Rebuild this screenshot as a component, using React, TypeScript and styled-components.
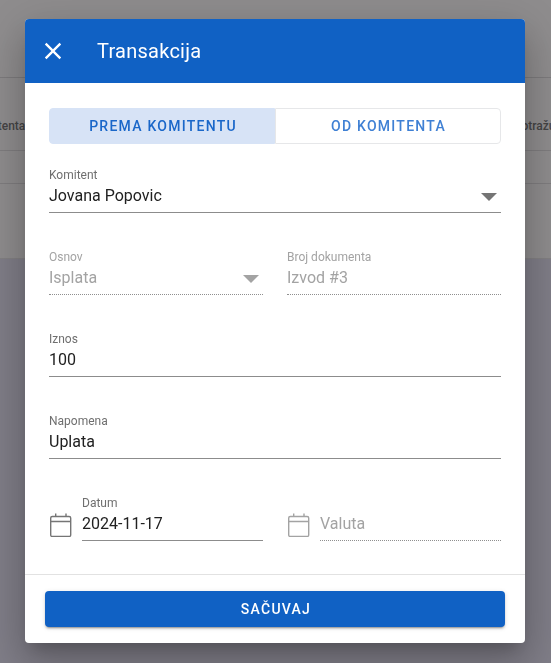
import React from "react";
import styled, { createGlobalStyle } from "styled-components";

const Global = createGlobalStyle`
  html, body { margin: 0; padding: 0; height: 100%; }
  body { font-family: Roboto, "Liberation Sans", sans-serif; background: #7f7d87; overflow: hidden; }
  #root { height: 100%; }
`;

const Page = styled.div`
  height: 663px;
  display: flex;
  flex-direction: column;
  background: #807e88;
`;
const PageTop = styled.div`
  height: 259px;
  box-sizing: border-box;
  background: #8f8d8e;
  border-bottom: 1px solid #838183;
  display: flex;
  flex-direction: column;
`;
const TopBar = styled.div`
  height: 78px;
  flex: none;
  box-sizing: border-box;
  background: #8f8d8e;
  border-bottom: 1px solid #7d7b7d;
`;
const HeaderRow = styled.div`
  height: 73px;
  flex: none;
  box-sizing: border-box;
  padding-top: 24px;
  display: flex;
  justify-content: space-between;
  align-items: center;
  border-bottom: 1px solid #7f7d7f;
  font-size: 12px;
  font-weight: 500;
  color: #454445;
  overflow: hidden;
  white-space: nowrap;
`;
const CellLeft = styled.span`
  margin-left: -30px;
`;
const CellRight = styled.span`
  margin-right: -14px;
`;
const BodyRow = styled.div`
  height: 33px;
  flex: none;
  box-sizing: border-box;
  border-bottom: 1px solid #7f7d7f;
`;

const Scrim = styled.div`
  position: fixed;
  inset: 0;
  display: flex;
  align-items: flex-start;
  padding: 19px 0 0 25px;
`;
const Dialog = styled.div`
  width: 500px;
  height: 624px;
  display: flex;
  flex-direction: column;
  background: #fff;
  border-radius: 4px;
  overflow: hidden;
  box-shadow: 0 11px 15px -7px rgba(0,0,0,.2), 0 24px 38px 3px rgba(0,0,0,.14), 0 9px 46px 8px rgba(0,0,0,.12);
`;
const Header = styled.header`
  height: 64px;
  flex: none;
  display: flex;
  align-items: center;
  padding-left: 14px;
  background: #1061c4;
  color: #fff;
`;
const CloseBtn = styled.span`
  display: flex;
  width: 28px;
  height: 28px;
`;
const Title = styled.h2`
  margin: 0 0 0 30px;
  font-size: 20px;
  font-weight: 400;
  letter-spacing: 0.25px;
`;
const Content = styled.div`
  flex: 1;
  padding: 25px 24px 0;
  display: flex;
  flex-direction: column;
`;
const Toggle = styled.div`
  display: flex;
  height: 36px;
  margin-bottom: 20px;
`;
const ToggleBtn = styled.div<{ $active?: boolean }>`
  flex: 0 0 50%;
  box-sizing: border-box;
  display: flex;
  align-items: center;
  justify-content: center;
  padding-left: ${p => (p.$active ? "2px" : "1px")};
  font-size: 14px;
  font-weight: 500;
  letter-spacing: 1.25px;
  color: ${p => (p.$active ? "#1a67c9" : "#3f80d4")};
  background: ${p => (p.$active ? "#d7e3f6" : "#fff")};
  border: 1px solid ${p => (p.$active ? "#d7e3f6" : "#e6e7e9")};
  border-radius: ${p => (p.$active ? "4px 0 0 4px" : "0 4px 4px 0")};
`;
const Row = styled.div`
  display: flex;
  gap: 24px;
  margin-bottom: 33px;
`;
const Field = styled.div<{ $disabled?: boolean }>`
  flex: 1;
  min-width: 0;
  position: relative;
  height: 49px;
  box-sizing: border-box;
  padding-top: 4px;
  border-bottom: 1px ${p => (p.$disabled ? "dotted #8f8f8f" : "solid #8c8c8c")};
  color: ${p => (p.$disabled ? "#a3a3a3" : "#212121")};
`;
const Label = styled.div<{ $muted?: boolean }>`
  font-size: 12px;
  line-height: 14px;
  height: 14px;
  color: ${p => (p.$muted ? "#a3a3a3" : "#6f6f6f")};
`;
const Value = styled.div`
  font-size: 16px;
  line-height: 19px;
  margin-top: 4px;
`;
const Caret = styled.span<{ $disabled?: boolean }>`
  position: absolute;
  right: 4px;
  top: 29px;
  width: 0;
  height: 0;
  border-left: 8px solid transparent;
  border-right: 8px solid transparent;
  border-top: 8px solid ${p => (p.$disabled ? "#a3a3a3" : "#757575")};
`;
const DateField = styled.div`
  flex: 1;
  min-width: 0;
  display: flex;
  align-items: flex-end;
  gap: 9px;
`;
const IconBox = styled.span<{ $disabled?: boolean }>`
  display: flex;
  width: 24px;
  height: 24px;
  margin-bottom: 4px;
  color: ${p => (p.$disabled ? "#a3a3a3" : "#757575")};
`;
const Placeholder = styled.div`
  font-size: 16px;
  line-height: 19px;
  margin-top: 18px;
`;
const Footer = styled.footer`
  flex: none;
  height: 69px;
  box-sizing: border-box;
  border-top: 1px solid #e2e2e2;
  padding: 16px 20px;
`;
const SaveBtn = styled.div`
  height: 36px;
  display: flex;
  align-items: center;
  justify-content: center;
  padding-left: 2px;
  background: #1061c4;
  color: #fff;
  border-radius: 4px;
  font-size: 14px;
  font-weight: 500;
  letter-spacing: 1.25px;
  box-shadow: 0 3px 1px -2px rgba(0,0,0,.2), 0 2px 2px 0 rgba(0,0,0,.14), 0 1px 5px 0 rgba(0,0,0,.12);
`;

const CloseIcon = () => (
  <svg width="28" height="28" viewBox="0 0 24 24" fill="currentColor">
    <path d="M19 6.41 17.59 5 12 10.59 6.41 5 5 6.41 10.59 12 5 17.59 6.41 19 12 13.41 17.59 19 19 17.59 13.41 12z" />
  </svg>
);
const CalendarIcon = () => (
  <svg width="24" height="24" viewBox="0 0 24 24" fill="none" stroke="currentColor" strokeWidth="1.4">
    <rect x="1.7" y="3.5" width="20" height="20" rx="1.6" />
    <path d="M1.7 8.5h20M6.7 0.5v3M17 0.5v3" />
  </svg>
);

export default function App() {
  return (
    <>
      <Global />
      <Page>
        <PageTop>
          <TopBar />
          <HeaderRow>
            <CellLeft>Komitenta</CellLeft>
            <CellRight>Potražuje</CellRight>
          </HeaderRow>
          <BodyRow />
        </PageTop>
      </Page>
      <Scrim>
        <Dialog>
          <Header>
            <CloseBtn><CloseIcon /></CloseBtn>
            <Title>Transakcija</Title>
          </Header>
          <Content>
            <Toggle>
              <ToggleBtn $active>PREMA KOMITENTU</ToggleBtn>
              <ToggleBtn>OD KOMITENTA</ToggleBtn>
            </Toggle>
            <Row>
              <Field>
                <Label>Komitent</Label>
                <Value>Jovana Popovic</Value>
                <Caret />
              </Field>
            </Row>
            <Row>
              <Field $disabled>
                <Label $muted>Osnov</Label>
                <Value>Isplata</Value>
                <Caret $disabled />
              </Field>
              <Field $disabled>
                <Label $muted>Broj dokumenta</Label>
                <Value>Izvod #3</Value>
              </Field>
            </Row>
            <Row>
              <Field>
                <Label>Iznos</Label>
                <Value>100</Value>
              </Field>
            </Row>
            <Row>
              <Field>
                <Label>Napomena</Label>
                <Value>Uplata</Value>
              </Field>
            </Row>
            <Row>
              <DateField>
                <IconBox><CalendarIcon /></IconBox>
                <Field>
                  <Label>Datum</Label>
                  <Value>2024-11-17</Value>
                </Field>
              </DateField>
              <DateField>
                <IconBox $disabled><CalendarIcon /></IconBox>
                <Field $disabled>
                  <Placeholder>Valuta</Placeholder>
                </Field>
              </DateField>
            </Row>
          </Content>
          <Footer>
            <SaveBtn>SAČUVAJ</SaveBtn>
          </Footer>
        </Dialog>
      </Scrim>
    </>
  );
}
